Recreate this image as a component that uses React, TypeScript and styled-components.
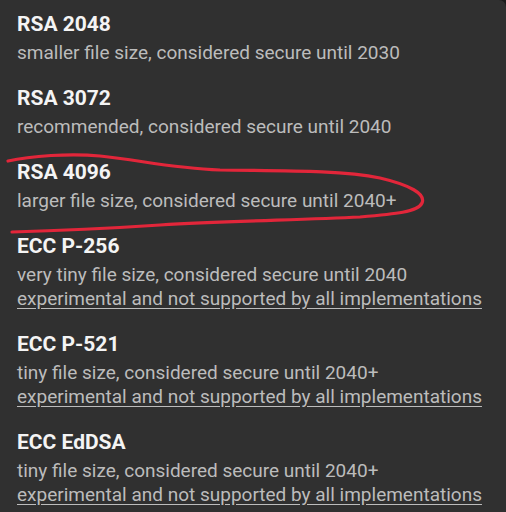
import React from "react";
import styled, { createGlobalStyle } from "styled-components";

const Global = createGlobalStyle`
  html, body { margin: 0; padding: 0; background: #1c1c1c; }
  body { font-family: Roboto, "Noto Sans", sans-serif; }
`;

const Panel = styled.div`
  position: relative;
  width: 506px;
  height: 512px;
  background: #303030;
  border-top-right-radius: 7px;
  box-sizing: border-box;
  padding: 11px 0 0 17px;
  display: flex;
  flex-direction: column;
  gap: 20px;
  overflow: hidden;
`;

const Item = styled.div`
  display: flex;
  flex-direction: column;
`;

const Title = styled.div`
  font-size: 21px;
  font-weight: 700;
  line-height: 26px;
  color: #f4f4f4;
  margin-bottom: 4px;
`;

const Line = styled.div<{ $link?: boolean }>`
  font-size: 19px;
  line-height: 24px;
  color: #bcbcbc;
  text-decoration: ${(p) => (p.$link ? "underline" : "none")};
  text-underline-offset: 3px;
  white-space: nowrap;
`;

const Mark = styled.svg`
  position: absolute;
  left: 0;
  top: 0;
  pointer-events: none;
`;

const items = [
  { t: "RSA 2048", d: "smaller file size, considered secure until 2030" },
  { t: "RSA 3072", d: "recommended, considered secure until 2040" },
  { t: "RSA 4096", d: "larger file size, considered secure until 2040+" },
  { t: "ECC P-256", d: "very tiny file size, considered secure until 2040", x: true },
  { t: "ECC P-521", d: "tiny file size, considered secure until 2040+", x: true },
  { t: "ECC EdDSA", d: "tiny file size, considered secure until 2040+", x: true },
];

export default function App() {
  return (
    <>
      <Global />
      <Panel>
        {items.map((it) => (
          <Item key={it.t}>
            <Title>{it.t}</Title>
            <Line>{it.d}</Line>
            {it.x && <Line $link>experimental and not supported by all implementations</Line>}
          </Item>
        ))}
        <Mark width="506" height="512" viewBox="0 0 506 512">
          <path
            d="M8 161 C 30 156, 70 153, 100 156 C 140 160, 170 168, 220 170 C 280 171, 340 170, 380 178 C 410 185, 426 194, 422 203 C 418 212, 395 214, 360 217 C 300 220, 230 221, 160 225 C 100 229, 50 231, 12 232"
            fill="none"
            stroke="#e2263a"
            strokeWidth="3.2"
            strokeLinecap="round"
          />
        </Mark>
      </Panel>
    </>
  );
}
